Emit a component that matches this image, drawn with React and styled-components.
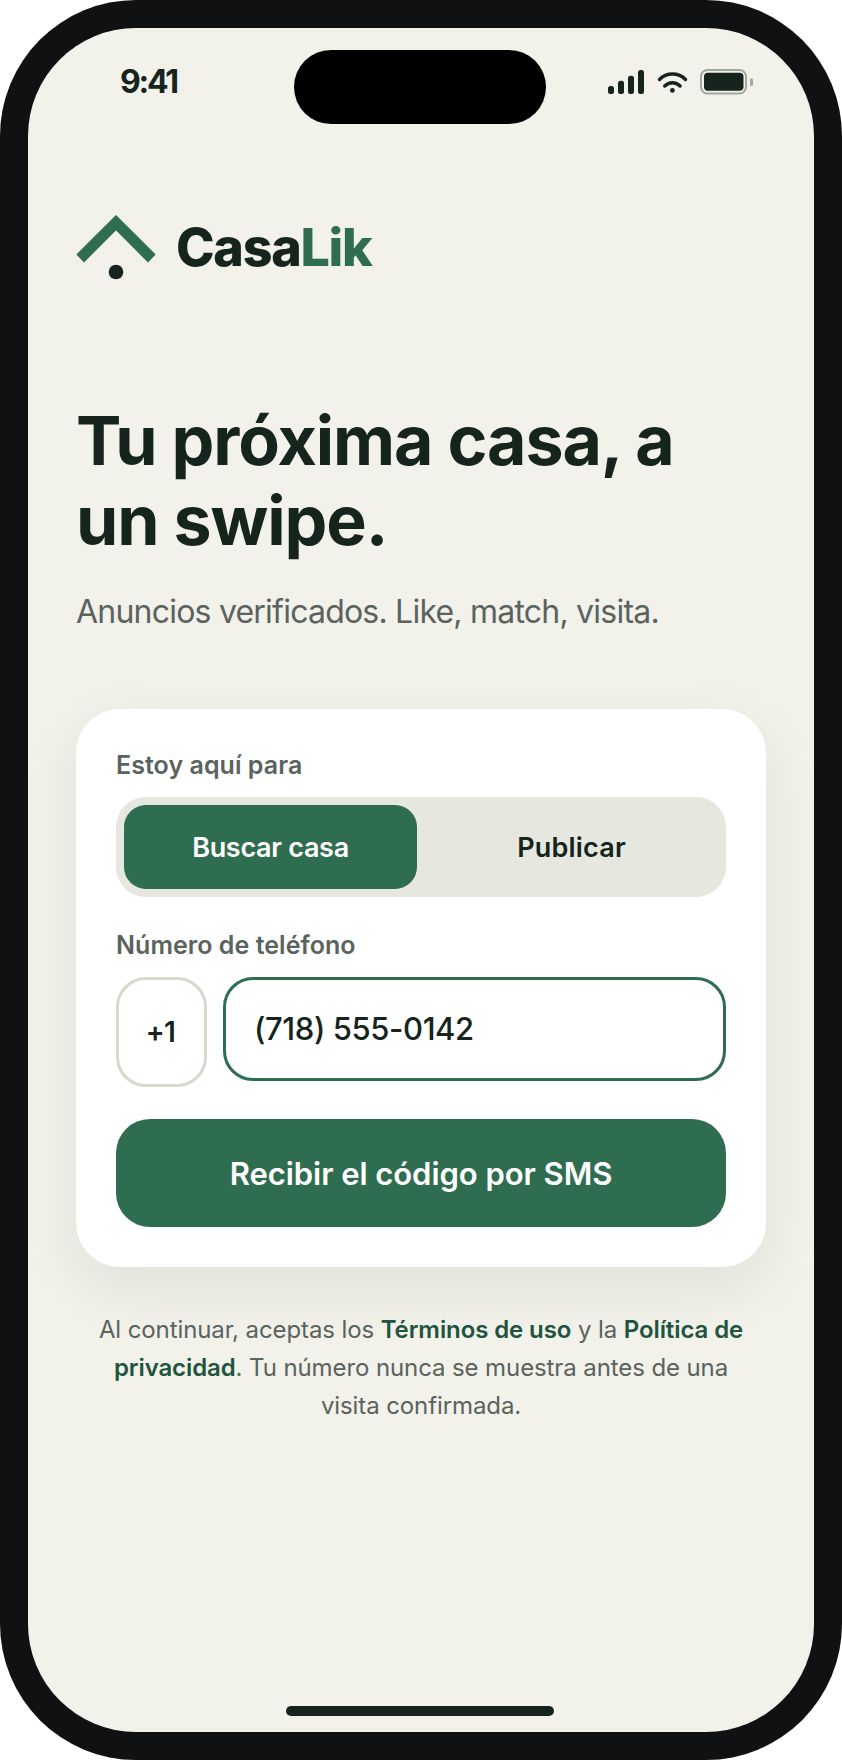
import React from 'react'
import styled, { createGlobalStyle } from 'styled-components'

const Global = createGlobalStyle`
    html, body {
        margin: 0;
        padding: 0;
        background: #ffffff;
    }
    * {
        box-sizing: border-box;
    }
`
const Phone = styled.div`
    width: 842px;
    height: 1760px;
    padding: 28px;
    background: #0f1113;
    border-radius: 136px;
`
const Screen = styled.div`
    position: relative;
    height: 1704px;
    background: #f2f1ea;
    border-radius: 108px;
    overflow: hidden;
    font-family: Inter, 'Liberation Sans', sans-serif;
    color: #15241c;
`
const StatusBar = styled.div`
    height: 96px;
    padding: 34px 61px 0 92px;
    display: flex;
    justify-content: space-between;
    align-items: flex-start;
`
const Time = styled.div`
    font-size: 32px;
    line-height: 40px;
    font-weight: 700;
    letter-spacing: -2.2px;
`
const Notch = styled.div`
    position: absolute;
    top: 22px;
    left: 266px;
    width: 252px;
    height: 74px;
    border-radius: 37px;
    background: #000000;
`
const StatusIcons = styled.div`
    display: flex;
    align-items: center;
    gap: 12.5px;
    height: 26px;
    margin-top: 7px;
`
const Content = styled.div`
    padding: 84px 48px 0;
`
const Brand = styled.div`
    display: flex;
    align-items: flex-start;
    gap: 20px;
`
const Wordmark = styled.div`
    font-size: 52px;
    line-height: 60px;
    font-weight: 800;
    letter-spacing: -1.3px;
    padding-top: 10px;
`
const Accent = styled.span`
    color: #2f6d51;
`
const Title = styled.h1`
    margin: 120px 0 0;
    font-size: 68px;
    line-height: 80px;
    font-weight: 700;
    letter-spacing: -1.1px;
`
const Subtitle = styled.p`
    margin: 30px 0 0;
    font-size: 32px;
    line-height: 44px;
    font-weight: 400;
    letter-spacing: -0.78px;
    color: #5a635e;
`
const Card = styled.div`
    margin-top: 75px;
    padding: 40px;
    height: 558px;
    background: #ffffff;
    border-radius: 44px;
    box-shadow: 0 20px 60px rgba(22, 36, 28, 0.08);
`
const Label = styled.div`
    font-size: 25px;
    line-height: 32px;
    font-weight: 600;
    letter-spacing: 0.05px;
    color: #5a635e;
`
const Segmented = styled.div`
    margin-top: 16px;
    padding: 8px;
    height: 100px;
    display: grid;
    grid-template-columns: 293px 1fr;
    gap: 8px;
    background: #e6e7df;
    border-radius: 30px;
`
const Segment = styled.div`
    display: flex;
    align-items: center;
    justify-content: center;
    font-size: 27px;
    font-weight: 600;
    letter-spacing: ${(p) => (p.$active ? '-0.3px' : '0.2px')};
    border-radius: 22px;
    background: ${(p) => (p.$active ? '#2f6d51' : 'transparent')};
    color: ${(p) => (p.$active ? '#ffffff' : '#15241c')};
`
const PhoneLabel = styled(Label)`
    margin-top: 32px;
`
const PhoneRow = styled.div`
    margin-top: 16px;
    display: flex;
    align-items: flex-start;
    gap: 16px;
`
const Prefix = styled.div`
    width: 91px;
    height: 110px;
    padding-right: 2px;
    display: flex;
    align-items: center;
    justify-content: center;
    font-size: 28px;
    font-weight: 600;
    letter-spacing: -0.6px;
    border: 3px solid #d8d8cc;
    border-radius: 30px;
`
const PhoneInput = styled.div`
    flex: 1;
    height: 104px;
    padding: 0 28px 2px;
    display: flex;
    align-items: center;
    font-size: 31px;
    font-weight: 500;
    letter-spacing: -0.4px;
    border: 3px solid #2f6d51;
    border-radius: 30px;
`
const Submit = styled.div`
    margin-top: 32px;
    height: 108px;
    display: flex;
    align-items: center;
    justify-content: center;
    font-size: 31px;
    font-weight: 600;
    letter-spacing: -0.05px;
    color: #ffffff;
    background: #2f6d51;
    border-radius: 34px;
`
const Legal = styled.p`
    margin: 44px 0 0;
    padding: 0 12px;
    font-size: 24px;
    line-height: 38px;
    letter-spacing: -0.1px;
    text-align: center;
    color: #5a635e;
`
const LegalLink = styled.b`
    font-weight: 600;
    color: #1f5540;
`
const HomeBar = styled.div`
    position: absolute;
    left: 258px;
    bottom: 16px;
    width: 268px;
    height: 10px;
    border-radius: 5px;
    background: #15241c;
`

const Signal = () => (
    <svg width="36" height="24" viewBox="0 0 36 24" fill="#15241c">
        <rect x="0" y="16" width="6" height="8" rx="2.5" />
        <rect x="10" y="10.7" width="6" height="13.3" rx="2.5" />
        <rect x="20" y="5.7" width="6" height="18.3" rx="2.5" />
        <rect x="30" y="0" width="6" height="24" rx="2.5" />
    </svg>
)
const Wifi = () => (
    <svg width="31" height="21" viewBox="0 0 31 21" fill="none" stroke="#15241c" strokeWidth="3.4" strokeLinecap="round">
        <path d="M2.5 7.5C9.5 0.2 21.5 0.2 28.5 7.5" />
        <path d="M7.7 14C12 9.6 18.8 9.6 23.1 14" />
        <circle cx="15.4" cy="18.4" r="2.4" fill="#15241c" stroke="none" />
    </svg>
)
const Battery = () => (
    <svg width="53" height="26" viewBox="0 0 53 26">
        <rect x="1" y="1" width="45" height="23.5" rx="6.5" fill="none" stroke="#a3a79f" strokeWidth="2" />
        <rect x="4" y="3.7" width="39.5" height="18" rx="4" fill="#15241c" />
        <rect x="50" y="9.3" width="3" height="7.7" rx="1.5" fill="#a3a79f" />
    </svg>
)
const Logo = () => (
    <svg width="80" height="72" viewBox="0 0 80 72">
        <path d="M4.2 50.5L40 14.7L75.8 50.5" fill="none" stroke="#2f6d51" strokeWidth="11" />
        <circle cx="40" cy="64" r="7.3" fill="#15241c" />
    </svg>
)

export default function App() {
    return (
        <>
            <Global />
            <Phone>
                <Screen>
                    <StatusBar>
                        <Time>9:41</Time>
                        <StatusIcons>
                            <Signal />
                            <Wifi />
                            <Battery />
                        </StatusIcons>
                    </StatusBar>
                    <Notch />
                    <Content>
                        <Brand>
                            <Logo />
                            <Wordmark>
                                Casa<Accent>Lik</Accent>
                            </Wordmark>
                        </Brand>
                        <Title>
                            Tu próxima casa, a
                            <br />
                            un swipe.
                        </Title>
                        <Subtitle>Anuncios verificados. Like, match, visita.</Subtitle>
                        <Card>
                            <Label>Estoy aquí para</Label>
                            <Segmented>
                                <Segment $active>Buscar casa</Segment>
                                <Segment>Publicar</Segment>
                            </Segmented>
                            <PhoneLabel>Número de teléfono</PhoneLabel>
                            <PhoneRow>
                                <Prefix>+1</Prefix>
                                <PhoneInput>(718) 555-0142</PhoneInput>
                            </PhoneRow>
                            <Submit>Recibir el código por SMS</Submit>
                        </Card>
                        <Legal>
                            Al continuar, aceptas los <LegalLink>Términos de uso</LegalLink> y la{' '}
                            <LegalLink>Política de privacidad</LegalLink>. Tu número nunca se muestra antes de una visita confirmada.
                        </Legal>
                    </Content>
                    <HomeBar />
                </Screen>
            </Phone>
        </>
    )
}
